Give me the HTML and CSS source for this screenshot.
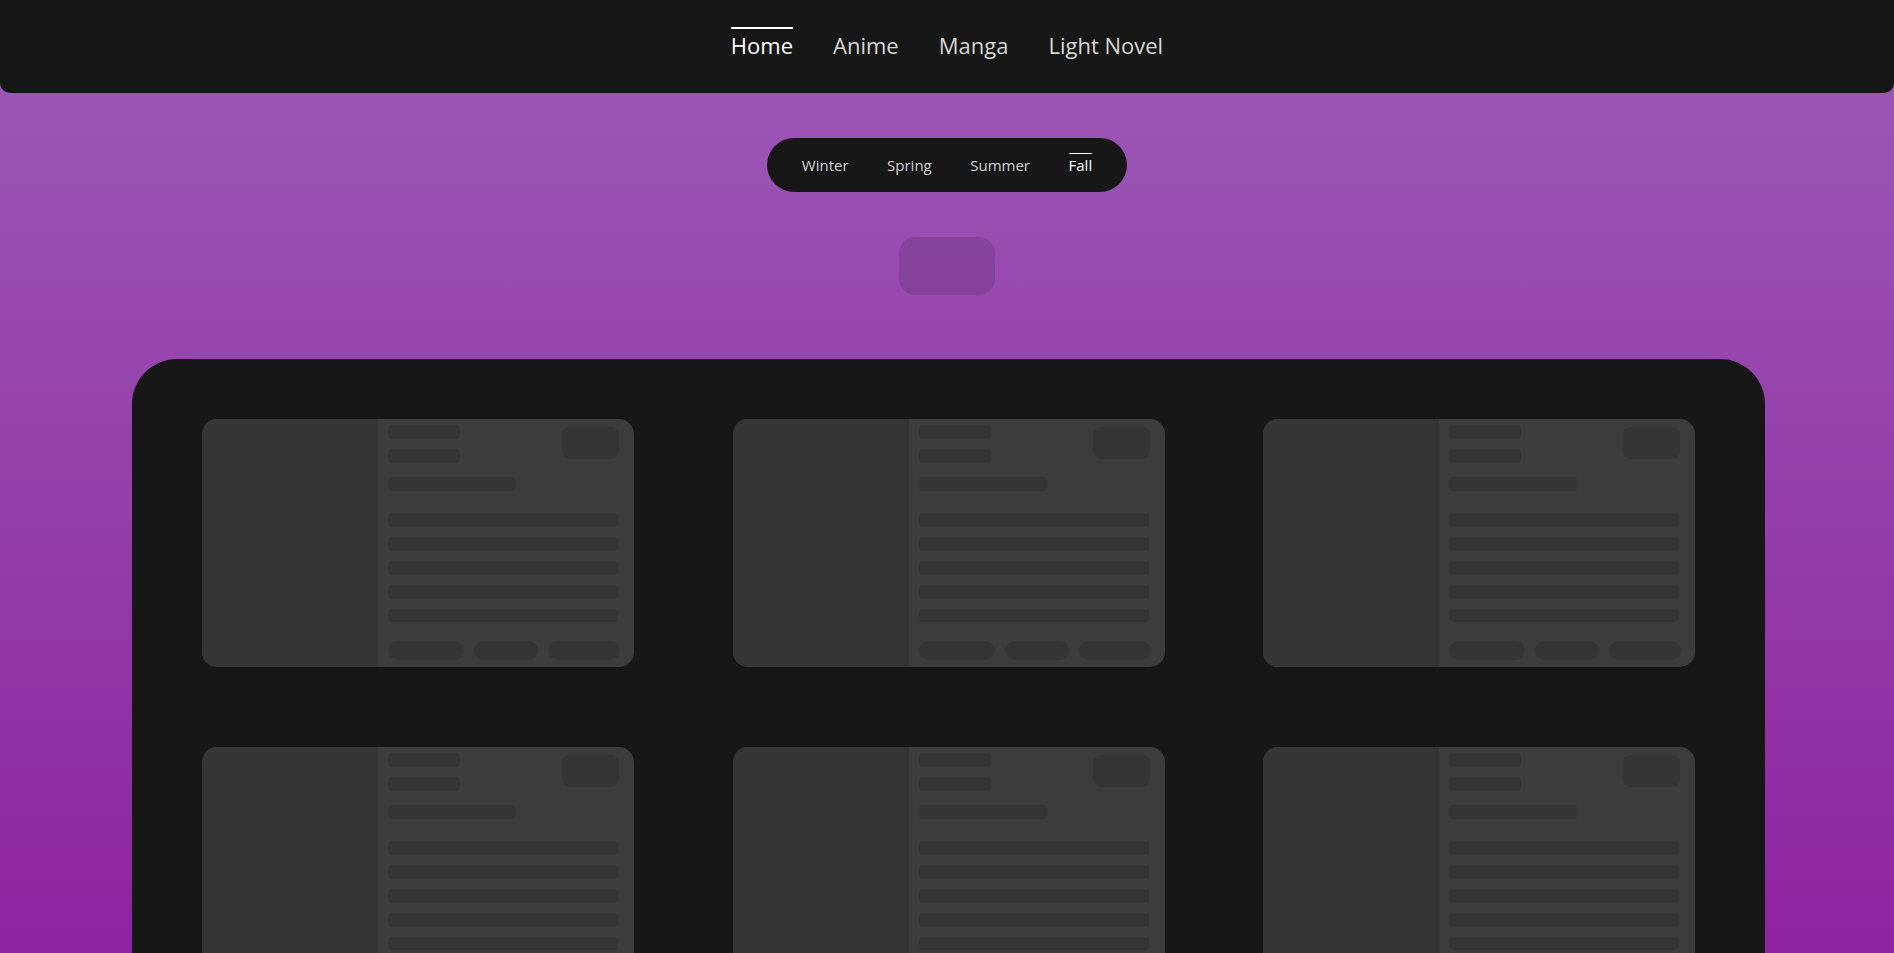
FILE: index.html
```html
<!DOCTYPE html>
<html lang="en">
<head>
<meta charset="utf-8">
<title>Seasonal</title>
<link rel="stylesheet" href="styles.css">
</head>
<body>
<nav class="topnav">
  <a class="topnav-item active" href="#">Home</a>
  <a class="topnav-item" href="#">Anime</a>
  <a class="topnav-item" href="#">Manga</a>
  <a class="topnav-item" href="#">Light Novel</a>
</nav>

<div class="seasons">
  <a class="season" href="#">Winter</a>
  <a class="season" href="#">Spring</a>
  <a class="season" href="#">Summer</a>
  <a class="season active" href="#">Fall</a>
</div>

<div class="year-skeleton"></div>

<main class="panel">
  <div class="grid">
    <div class="card">
      <div class="card-img"></div>
      <div class="card-body">
        <div class="card-head">
          <div class="head-bars"><div class="sk sk-short"></div><div class="sk sk-short sk-2"></div><div class="sk sk-mid"></div></div>
          <div class="sk-badge"></div>
        </div>
        <div class="lines"><div class="sk sk-line"></div><div class="sk sk-line"></div><div class="sk sk-line"></div><div class="sk sk-line"></div><div class="sk sk-line"></div></div>
        <div class="pills"><div class="pill p1"></div><div class="pill p2"></div><div class="pill p3"></div></div>
      </div>
    </div>
    <div class="card">
      <div class="card-img"></div>
      <div class="card-body">
        <div class="card-head">
          <div class="head-bars"><div class="sk sk-short"></div><div class="sk sk-short sk-2"></div><div class="sk sk-mid"></div></div>
          <div class="sk-badge"></div>
        </div>
        <div class="lines"><div class="sk sk-line"></div><div class="sk sk-line"></div><div class="sk sk-line"></div><div class="sk sk-line"></div><div class="sk sk-line"></div></div>
        <div class="pills"><div class="pill p1"></div><div class="pill p2"></div><div class="pill p3"></div></div>
      </div>
    </div>
    <div class="card">
      <div class="card-img"></div>
      <div class="card-body">
        <div class="card-head">
          <div class="head-bars"><div class="sk sk-short"></div><div class="sk sk-short sk-2"></div><div class="sk sk-mid"></div></div>
          <div class="sk-badge"></div>
        </div>
        <div class="lines"><div class="sk sk-line"></div><div class="sk sk-line"></div><div class="sk sk-line"></div><div class="sk sk-line"></div><div class="sk sk-line"></div></div>
        <div class="pills"><div class="pill p1"></div><div class="pill p2"></div><div class="pill p3"></div></div>
      </div>
    </div>
    <div class="card">
      <div class="card-img"></div>
      <div class="card-body">
        <div class="card-head">
          <div class="head-bars"><div class="sk sk-short"></div><div class="sk sk-short sk-2"></div><div class="sk sk-mid"></div></div>
          <div class="sk-badge"></div>
        </div>
        <div class="lines"><div class="sk sk-line"></div><div class="sk sk-line"></div><div class="sk sk-line"></div><div class="sk sk-line"></div><div class="sk sk-line"></div></div>
        <div class="pills"><div class="pill p1"></div><div class="pill p2"></div><div class="pill p3"></div></div>
      </div>
    </div>
    <div class="card">
      <div class="card-img"></div>
      <div class="card-body">
        <div class="card-head">
          <div class="head-bars"><div class="sk sk-short"></div><div class="sk sk-short sk-2"></div><div class="sk sk-mid"></div></div>
          <div class="sk-badge"></div>
        </div>
        <div class="lines"><div class="sk sk-line"></div><div class="sk sk-line"></div><div class="sk sk-line"></div><div class="sk sk-line"></div><div class="sk sk-line"></div></div>
        <div class="pills"><div class="pill p1"></div><div class="pill p2"></div><div class="pill p3"></div></div>
      </div>
    </div>
    <div class="card">
      <div class="card-img"></div>
      <div class="card-body">
        <div class="card-head">
          <div class="head-bars"><div class="sk sk-short"></div><div class="sk sk-short sk-2"></div><div class="sk sk-mid"></div></div>
          <div class="sk-badge"></div>
        </div>
        <div class="lines"><div class="sk sk-line"></div><div class="sk sk-line"></div><div class="sk sk-line"></div><div class="sk sk-line"></div><div class="sk sk-line"></div></div>
        <div class="pills"><div class="pill p1"></div><div class="pill p2"></div><div class="pill p3"></div></div>
      </div>
    </div>
  </div>
</main>
</body>
</html>
```

FILE: styles.css
```css
* { box-sizing: border-box; }

html, body {
  margin: 0;
  padding: 0;
}

body {
  font-family: "Open Sans", "Noto Sans", sans-serif;
  background: linear-gradient(180deg, #9c5bb8 0%, #8f24a0 100%) fixed;
  min-height: 100vh;
  padding-bottom: 80px;
}

a { text-decoration: none; }

.topnav {
  height: 93px;
  background: #171717;
  border-radius: 0 0 10px 10px;
  display: flex;
  justify-content: center;
  align-items: flex-start;
  gap: 40px;
  padding-top: 27px;
}

.topnav-item {
  font-size: 22px;
  line-height: 30px;
  color: #d6d6d6;
  border-top: 2px solid transparent;
  padding-top: 0.5px;
}

.topnav-item.active {
  color: #ffffff;
  border-top-color: #ffffff;
}

.seasons {
  width: max-content;
  margin: 45px auto 0;
  background: #171717;
  border-radius: 27px;
  height: 54px;
  display: flex;
  align-items: flex-start;
  gap: 38.5px;
  padding: 15px 34.5px 0;
}

.season {
  font-size: 15px;
  line-height: 20px;
  color: #d2d2d2;
  border-top: 1px solid transparent;
  padding-top: 1px;
}

.season.active {
  color: #ffffff;
  border-top-color: #ffffff;
}

.year-skeleton {
  width: 96px;
  height: 58px;
  margin: 45px auto 0;
  border-radius: 16px;
  background: rgba(0, 0, 0, 0.12);
}

.panel {
  width: 1633px;
  margin: 64px 0 0 132px;
  background: #171717;
  border-radius: 45px;
  padding: 60px 70px 80px;
}

.grid {
  display: grid;
  grid-template-columns: repeat(3, 432px);
  justify-content: space-between;
  row-gap: 80px;
}

.card {
  height: 248px;
  border-radius: 15px;
  overflow: hidden;
  display: grid;
  grid-template-columns: 176px 1fr;
  background: #3c3c3c;
}

.card-img {
  background: #353535;
}

.card-body {
  padding: 6px 14px 7px 10px;
  display: flex;
  flex-direction: column;
}

.card-head {
  display: flex;
  justify-content: space-between;
  align-items: flex-start;
}

.head-bars {
  display: flex;
  flex-direction: column;
}

.sk {
  height: 13.6px;
  border-radius: 4px;
  background: #353535;
}

.sk-short { width: 72px; }
.sk-2 { margin-top: 10.4px; }
.sk-mid { width: 128px; margin-top: 14.4px; }

.sk-badge {
  width: 57px;
  height: 32px;
  margin-top: 2px;
  margin-right: 1px;
  border-radius: 8px;
  background: #353535;
}

.lines {
  margin-top: 22.4px;
  display: flex;
  flex-direction: column;
  gap: 10.4px;
}

.sk-line {
  width: 230px;
  border-radius: 4px;
}

.pills {
  margin-top: auto;
  display: flex;
  gap: 10px;
}

.pill {
  height: 19px;
  border-radius: 10px;
  background: #353535;
}

.p1 { width: 76px; }
.p2 { width: 64px; }
.p3 { width: 72px; }
```
